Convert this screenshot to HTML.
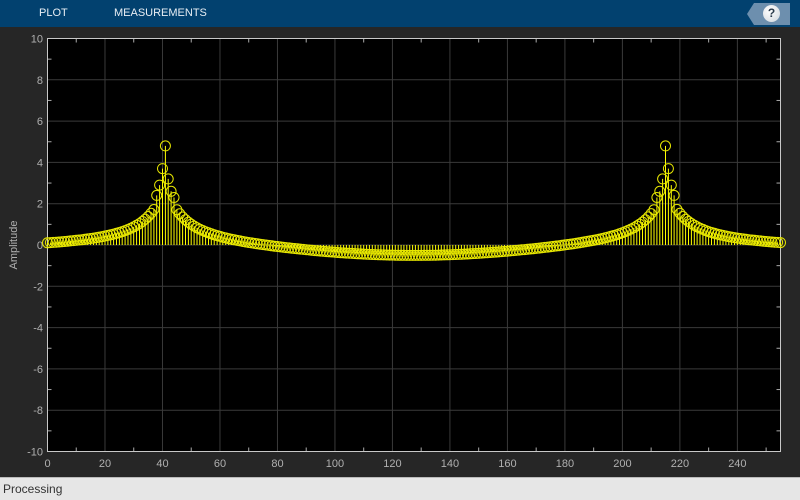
<!DOCTYPE html>
<html><head><style>
html,body{margin:0;padding:0;width:800px;height:500px;overflow:hidden;background:#262626;font-family:"Liberation Sans",sans-serif}
#tb{position:absolute;left:0;top:0;width:800px;height:27px;background:#02416f}
#tb span{position:absolute;top:7px;color:#e8eef4;font-size:11px}
#help{position:absolute;left:747px;top:3px;width:43px;height:22px;background:#6d8fae;clip-path:polygon(7px 0,100% 0,100% 100%,7px 100%,0 50%)}
#q{position:absolute;left:763px;top:5px;width:17px;height:17px;border-radius:50%;background:radial-gradient(circle at 40% 35%,#fff,#cfd6dc);color:#2a3b4c;font:bold 12px "Liberation Sans",sans-serif;text-align:center;line-height:17px}
#sb{position:absolute;left:0;top:477px;width:800px;height:23px;background:#e6e6e6;border-top:1px solid #bbb;box-sizing:border-box}
#sb span{position:absolute;left:3px;top:4px;font-size:12px;color:#333}
svg{position:absolute;left:0;top:0}
</style></head><body>
<div id="tb"><span style="left:39px">PLOT</span><span style="left:114px">MEASUREMENTS</span></div>
<div id="help"></div><div id="q">?</div>
<svg id="s" width="800" height="477"></svg>
<div id="sb"><span>Processing</span></div>
<script>
var L=47.5,R=780.5,T=38.5,B=451.5;
function X(n){return L+(n/255)*(R-L)}
function Y(v){return T+(10-v)/20*(B-T)}
var h='<rect x="'+L+'" y="'+T+'" width="'+(R-L)+'" height="'+(B-T)+'" fill="#000"/>';
for(var i=0;i<=240;i+=20){var x=X(i);h+='<line x1="'+x+'" y1="'+T+'" x2="'+x+'" y2="'+B+'" stroke="#3a3a3a"/>';
h+='<text x="'+x+'" y="467" fill="#b0b0b0" font-size="11" text-anchor="middle" font-family="Liberation Sans">'+i+'</text>';}
for(var i=10;i<255;i+=20){var x=X(i);h+='<line x1="'+x+'" y1="'+T+'" x2="'+x+'" y2="'+(T+4)+'" stroke="#aaa"/><line x1="'+x+'" y1="'+B+'" x2="'+x+'" y2="'+(B-4)+'" stroke="#aaa"/>';}
for(var v=-10;v<=10;v+=2){var y=Y(v);h+='<line x1="'+L+'" y1="'+y+'" x2="'+R+'" y2="'+y+'" stroke="#3a3a3a"/>';
h+='<text x="43" y="'+(y+4)+'" fill="#b0b0b0" font-size="11" text-anchor="end" font-family="Liberation Sans">'+v+'</text>';}
for(var v=-9;v<10;v+=2){var y=Y(v);h+='<line x1="'+L+'" y1="'+y+'" x2="'+(L+4)+'" y2="'+y+'" stroke="#aaa"/><line x1="'+R+'" y1="'+y+'" x2="'+(R-4)+'" y2="'+y+'" stroke="#aaa"/>';}
h+='<rect x="'+L+'" y="'+T+'" width="'+(R-L)+'" height="'+(B-T)+'" fill="none" stroke="#c8c8c8"/>';
h+='<text transform="translate(17,245) rotate(-90)" fill="#b0b0b0" font-size="11" text-anchor="middle" font-family="Liberation Sans">Amplitude</text>';
function pk(d){return 20.3/(d+5.9)}
var sp={41:4.8,215:4.8,40:3.7,216:3.7,42:3.2,214:3.2,39:2.9,217:2.9,43:2.6,213:2.6,38:2.4,218:2.4,44:2.3,212:2.3};
var y0=Y(0),st='',mk='';
for(var n=0;n<=255;n++){
 var d1=Math.abs(n-41),d2=Math.abs(n-215);
 var s=Math.sin(Math.PI*n/255);
 var v=pk(d1)+pk(d2)-0.42-0.52*Math.pow(s,4);
 if(sp[n]!==undefined)v=sp[n];
 var x=X(n),y=Y(v);
 st+='M'+x.toFixed(1)+' '+y0+'V'+y.toFixed(1);
 mk+='<circle cx="'+x.toFixed(1)+'" cy="'+y.toFixed(1)+'" r="5"/>';
}
h+='<path d="'+st+'" stroke="#ffff00" stroke-width="1" fill="none"/>';
h+='<g fill="none" stroke="#e6e600" stroke-width="1">'+mk+'</g>';
document.getElementById('s').innerHTML=h;
</script>
</body></html>
